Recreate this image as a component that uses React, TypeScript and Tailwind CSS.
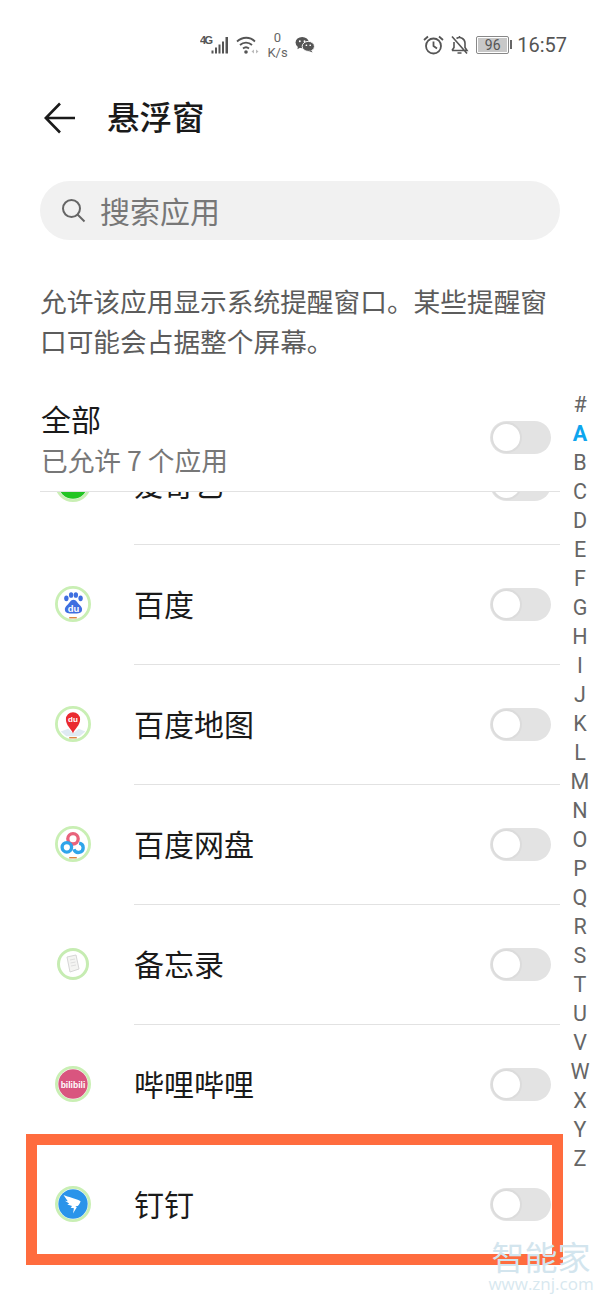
import React from "react";

const cjk = "font-['Noto_Sans_CJK_SC','Noto_Sans',sans-serif]";
const letters = "#ABCDEFGHIJKLMNOPQRSTUVWXYZ".split("");

const Toggle: React.FC = () => (
  <div className="flex h-[33px] w-[61px] shrink-0 items-center rounded-full bg-[#e3e3e3] pl-[1px]">
    <div className="h-[31px] w-[31px] rounded-full border-2 border-[#dcdcdc] bg-white" />
  </div>
);

const Ring: React.FC<{ children: React.ReactNode }> = ({ children }) => (
  <svg width="36" height="36" viewBox="0 0 38 38" className="shrink-0">
    <circle cx="19" cy="19" r="17.5" fill="#fff" stroke="#c9efb4" strokeWidth="3" />
    {children}
  </svg>
);

const BaiduIcon = () => (
  <Ring>
    <ellipse cx="12" cy="13" rx="2.3" ry="3" fill="#3f6fe0" />
    <ellipse cx="17" cy="9.5" rx="2.3" ry="3" fill="#3f6fe0" />
    <ellipse cx="22" cy="9.5" rx="2.3" ry="3" fill="#3f6fe0" />
    <ellipse cx="27" cy="13" rx="2.3" ry="3" fill="#3f6fe0" />
    <path d="M19.500 14.500c-3 0-4 3-6 5-2.500 2.500-3.500 4-3 6 .5 3 3.500 3.500 9 3.500s8.500-.5 9-3.500c.5-2-.5-3.500-3-6-2-2-3-5-6-5z" fill="#3f6fe0" />
    <text x="19.500" y="27" textAnchor="middle" fontSize="10" fontWeight="700" fill="#fff" fontFamily="Liberation Sans">du</text>
    <path d="M15 33.500h8" stroke="#d9863f" strokeWidth="1.500" />
  </Ring>
);

const MapIcon = () => (
  <Ring>
    <path d="M6 27l8-3 5 5 6-5 7 3-6 5H12z" fill="#dfeaf2" />
    <path d="M19 29c-1.500-5-7.500-8-7.500-15a7.500 7.500 0 0 1 15 0c0 7-6 10-7.500 15z" fill="#ea2a30" />
    <text x="19" y="17" textAnchor="middle" fontSize="8.500" fontWeight="700" fill="#fff" fontFamily="Liberation Sans">du</text>
    <path d="M15 33.500h8" stroke="#d9863f" strokeWidth="1.500" />
  </Ring>
);

const PanIcon = () => (
  <Ring>
    <circle cx="19" cy="13.500" r="5.500" fill="none" stroke="#e8637c" strokeWidth="3.500" />
    <circle cx="12.500" cy="22.500" r="5" fill="none" stroke="#2fa5ea" strokeWidth="3.500" />
    <path d="M20 24.500a5 5 0 1 0 5.500-6.500" fill="none" stroke="#2fa5ea" strokeWidth="3.500" />
    <path d="M15 33.500h8" stroke="#d9863f" strokeWidth="1.500" />
  </Ring>
);

const NoteIcon = () => (
  <svg width="32" height="32" viewBox="0 0 32 32" className="mx-[2px] shrink-0">
    <circle cx="16" cy="16" r="14.500" fill="#fff" stroke="#c6ecb2" strokeWidth="3" />
    <path d="M10 9l9-2 3 14-9 3z" fill="#f4f4f2" stroke="#d6d6d6" />
    <path d="M13 12l5-1M13.500 15l5-1M14 18l5-1" stroke="#dedede" />
  </svg>
);

const BiliIcon = () => (
  <Ring>
    <circle cx="19" cy="19" r="15.500" fill="#d9557f" />
    <text x="12.500" y="23" textAnchor="middle" fontSize="9" fontWeight="700" fill="#fff" fontFamily="Liberation Sans">bili</text>
    <text x="25.500" y="23" textAnchor="middle" fontSize="9" fontWeight="700" fill="#fff" fontFamily="Liberation Sans">bili</text>
  </Ring>
);

const DingIcon = () => (
  <Ring>
    <circle cx="19" cy="19" r="15.500" fill="#2a94ea" />
    <path d="M9 9.500c5 2.500 12 3 18 6.500-.5 2-1.500 3.500-3 5l-2.500.5 1.500 1-4 6.500 1-5.500-3.500-.5 1.500-2-5-1.500 2-1-4.500-3 3 .5z" fill="#fff" />
  </Ring>
);

const apps = [
  { name: "百度", icon: <BaiduIcon /> },
  { name: "百度地图", icon: <MapIcon /> },
  { name: "百度网盘", icon: <PanIcon /> },
  { name: "备忘录", icon: <NoteIcon /> },
  { name: "哔哩哔哩", icon: <BiliIcon /> },
  { name: "钉钉", icon: <DingIcon /> },
];

const AppRow: React.FC<{ name: string; icon: React.ReactNode; last?: boolean }> = ({ name, icon, last }) => (
  <div className="flex h-[120px] items-center pl-[55px] pr-[49px] relative">
    <div className="w-[79px] shrink-0">{icon}</div>
    <span className="mb-[2px] flex-1 text-[30px] leading-none text-[#1a1a1a]">{name}</span>
    <Toggle />
    {!last && <div className="absolute -bottom-px left-[134px] right-[40px] h-px bg-[#e2e2e2]" />}
  </div>
);

const StatusBar = () => (
  <div className="flex h-[88px] items-center pl-[200px] pr-[33px] pt-[1px] text-[#555]">
    <div className="flex items-center">
      <svg width="29" height="20" viewBox="0 0 29 20" className="mr-[7px]">
        <text x="0" y="9" fontSize="11" fontWeight="700" fill="#555" fontFamily="Liberation Sans" textLength="13">4G</text>
        <path d="M11.500 15.500h2v3h-2zM15 12.500h2v6h-2zM18.500 9.500h2v9h-2zM22 6.500h2v12h-2zM25.500 2h2.500v16.500h-2.500z" fill="#555" />
      </svg>
      <svg width="23" height="20" viewBox="0 0 23 20" fill="none" stroke="#555" strokeWidth="1.800" className="mr-[8px]">
        <path d="M1 6.500c5.500-5 13-5 18 0M4 10c3.500-3.300 8.500-3.300 12 0M7 13.500c2-1.700 4-1.700 6 0" />
        <circle cx="10" cy="17" r="1.800" fill="#555" stroke="none" />
        <path d="M18 14.500v4l-2.500-2zM20 14.500v4l2.500-2z" fill="#bbb" stroke="none" />
      </svg>
      <div className="mr-[7px] flex w-[21px] flex-col items-center font-['Roboto',sans-serif] text-[13px] leading-[15px] text-[#666]">
        <span>0</span>
        <span>K/s</span>
      </div>
      <svg width="20" height="17" viewBox="0 0 21 18">
        <ellipse cx="7.500" cy="7" rx="7" ry="6" fill="#555" />
        <path d="M3 11l-.5 3 3.500-2z" fill="#555" />
        <ellipse cx="14" cy="11" rx="6.500" ry="5.300" fill="#555" stroke="#fff" strokeWidth="1" />
        <path d="M17 15l1.500 2.500-4-1.500z" fill="#555" />
        <circle cx="5" cy="5.500" r="1" fill="#fff" />
        <circle cx="10" cy="5.500" r="1" fill="#fff" />
        <circle cx="12" cy="9.800" r=".9" fill="#fff" />
        <circle cx="16" cy="9.800" r=".9" fill="#fff" />
      </svg>
    </div>
    <div className="ml-auto flex items-center">
      <svg width="21" height="20" viewBox="0 0 21 20" fill="none" stroke="#555" strokeWidth="1.800" className="mr-[6px]">
        <circle cx="10.500" cy="11" r="7.500" />
        <path d="M10.500 6.500V11l3.500 2.500M1 5l4-3.500M20 5l-4-3.500" />
      </svg>
      <svg width="19" height="20" viewBox="0 0 19 20" fill="none" stroke="#555" strokeWidth="1.600" className="mr-[7px]">
        <path d="M2 15.500h15l-2-3V8a5.500 5.500 0 0 0-8.500-4.500M4 7v5.500l-2 3M7.500 18h4M9.500 1v2M2 1.500l15 17" />
      </svg>
      <div className="mr-[1px] flex h-[18px] w-[33px] items-center justify-center rounded-[2px] border border-[#888] bg-white p-px">
        <div className="flex h-full w-full items-center justify-center bg-[#c8c8c8] font-['Roboto',sans-serif] text-[14px] leading-none text-[#555]">96</div>
      </div>
      <div className="mr-[5px] h-[9px] w-[2px] bg-[#666]" />
      <span className="font-['Roboto',sans-serif] text-[20px] leading-none text-[#555]">16:57</span>
    </div>
  </div>
);

export default function App() {
  return (
    <div className={`relative h-[1300px] w-[600px] overflow-hidden bg-white ${cjk}`}>
      <StatusBar />

      <div className="flex h-[60px] items-center pl-[44px]">
        <svg width="32" height="32" viewBox="0 0 32 32" fill="none" stroke="#1a1a1a" strokeWidth="2.600" className="mr-[31px]">
          <path d="M31 16H2M16 1.500L1.800 16 16 30.500" />
        </svg>
        <span className="mb-[4px] text-[32.500px] font-medium leading-none text-[#1a1a1a]">悬浮窗</span>
      </div>

      <div className="mx-[40px] mt-[33px] flex h-[59px] items-center rounded-full bg-[#f1f1f1] pl-[21px]">
        <svg width="25" height="25" viewBox="0 0 25 25" fill="none" stroke="#666" strokeWidth="2" className="mr-[14px]">
          <circle cx="10.500" cy="10.500" r="8.500" />
          <path d="M16.500 16.500l7 7" />
        </svg>
        <span className="mb-[2px] text-[30px] leading-none text-[#777]">搜索应用</span>
      </div>

      <p className="ml-[40px] mt-[41px] w-[520px] text-[26.700px] leading-[40px] text-[#5c5c5c]">
        允许该应用显示系统提醒窗口。某些提醒窗口可能会占据整个屏幕。
      </p>

      <div className="mt-[37px] flex h-[93px] items-start pl-[41px] pr-[49px]">
        <div className="flex-1">
          <div className="text-[30px] leading-[41px] text-[#1a1a1a]">全部</div>
          <div className="text-[26.700px] leading-[41px] text-[#777]">已允许 7 个应用</div>
        </div>
        <div className="mt-[23px]">
          <Toggle />
        </div>
      </div>
      <div className="mx-[40px] h-px bg-[#e2e2e2]" />

      <div className="overflow-hidden">
        <div className="-mt-[68px]">
          <AppRow name="爱奇艺" icon={<Ring><circle cx="19" cy="19" r="15.500" fill="#22c522" /></Ring>} />
          {apps.map((app, i) => (
            <AppRow key={app.name} name={app.name} icon={app.icon} last={i === apps.length - 1} />
          ))}
        </div>
      </div>

      {/* alphabet index */}
      <div className="absolute left-[560px] top-[390px] flex w-[40px] flex-col items-center font-['Roboto',sans-serif] text-[21.500px] leading-[29px] text-[#666]">
        {letters.map((l) => (
          <span key={l} className={l === "A" ? "font-bold text-[#0ea5ee]" : ""}>
            {l}
          </span>
        ))}
      </div>

      {/* annotation box */}
      <div className="absolute left-[26px] top-[1134px] h-[131px] w-[537px] border-[11px] border-[#ff6c3e]" />

      {/* watermark */}
      <div className="absolute left-[490px] top-[1238px] flex w-[102px] flex-col items-center text-[#d3e5ee]">
        <span className="text-[33px] leading-[36px]">智能家</span>
        <span className="font-['Open_Sans',sans-serif] text-[17px] leading-[20px] text-[#d8e8ef]">www.znj.com</span>
      </div>
    </div>
  );
}
